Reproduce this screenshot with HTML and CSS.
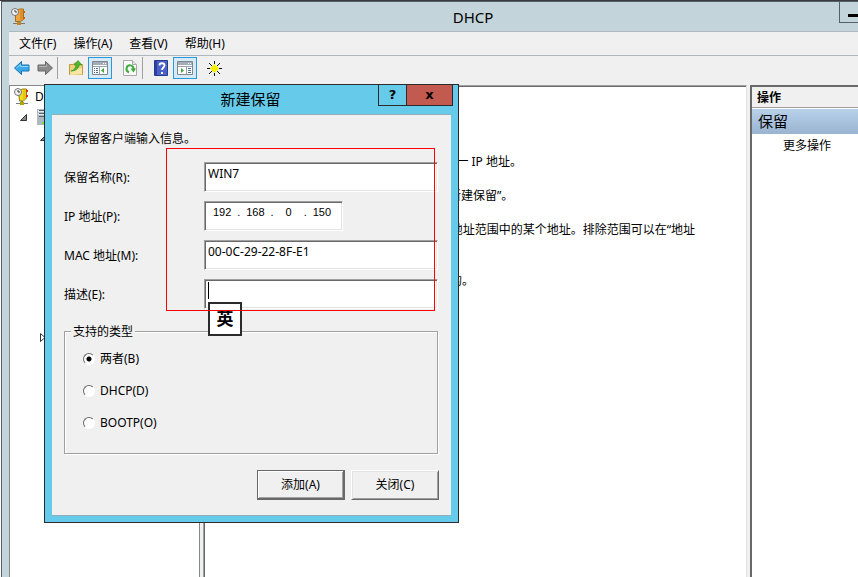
FILE: index.html
```html
<!DOCTYPE html>
<html lang="zh-CN">
<head>
  <meta charset="UTF-8">
  <meta name="viewport" content="width=device-width, initial-scale=1.0">
  <title>DHCP</title>
  <link rel="stylesheet" href="styles.css">
</head>
<body>
  <div class="desktop">
    <div class="strip"></div>
    <div class="window">
      <header class="titlebar">
        <svg class="app-icon" width="16" height="18" viewBox="0 0 16 18">
          <path d="M4.500 3.500l4-2.500h4v10.500l-3 2h-5z" fill="#efa53c" stroke="#a86c1a"/>
          <path d="M9 3l3-2v10l-3 2z" fill="#d9912f"/>
          <path d="M12 3h2v2h-2zM12 9h2v2h-2z" fill="#c8601e"/>
          <circle cx="4" cy="4" r="3.500" fill="#f2f2f2" stroke="#777"/>
          <path d="M4 2v2h2" fill="none" stroke="#444"/>
          <path d="M7 13h2v2H7zM2 15h12v1H2z" fill="#777"/>
          <path d="M6 14h4v3H6z" fill="#c8871e"/>
        </svg>
        <h1>DHCP</h1>
        <button class="minimize" aria-label="最小化"><span></span></button>
      </header>

      <nav class="menubar">
        <a href="#">文件(F)</a>
        <a href="#">操作(A)</a>
        <a href="#">查看(V)</a>
        <a href="#">帮助(H)</a>
      </nav>

      <div class="toolbar">
        <button class="tool" aria-label="后退">
          <svg width="18" height="16" viewBox="0 0 18 16"><path d="M1.500 8l7-6.500V5h7.500v6H8.500v3.500z" fill="#39a9ea" stroke="#1a6fb0"/><path d="M3.500 8l4-3.500V6.500h8" fill="none" stroke="#8fd6fb"/></svg>
        </button>
        <button class="tool" aria-label="前进">
          <svg width="18" height="16" viewBox="0 0 18 16"><path d="M16.500 8l-7-6.500V5H2v6h7.500v3.500z" fill="#8b8b8b" stroke="#666"/><path d="M3 6.500h7.500V4.500" fill="none" stroke="#b5b5b5"/></svg>
        </button>
        <span class="sep"></span>
        <button class="tool" aria-label="向上">
          <svg width="16" height="16" viewBox="0 0 16 16"><path d="M1.500 14.500v-10h4l1-1.500h3l1 1.500h4v10z" fill="#f0d27c" stroke="#c49a3c"/><path d="M2 15L14 14.500V8L4 9z" fill="#f8e6a4"/><path d="M3 11c3-1 5-3 5-6H6l4-4.500L14 5h-3c0 4-4 6-8 6z" fill="#4db82c" stroke="#2d8a17" stroke-width=".6"/></svg>
        </button>
        <button class="tool pressed" aria-label="显示控制台树">
          <svg width="16" height="14" viewBox="0 0 16 14"><path d="M.5.5h15v13H.5z" fill="#fff" stroke="#7e8894"/><path d="M1 1h14v3H1z" fill="#a3acb7"/><path d="M11 2h1v1h-1zM13 2h1v1h-1z" fill="#fff"/><path d="M1 5.500h14M7.500 6v7" stroke="#9aa3ad"/><path d="M2 7h1v1H2zM2 9h1v1H2zM2 11h1v1H2zM4 7h2v1H4zM4 9h2v1H4zM4 11h2v1H4z" fill="#4a6c92"/><path d="M12 7v5L9 9.500z" fill="#3fa535"/></svg>
        </button>
        <button class="tool" aria-label="刷新">
          <svg width="14" height="16" viewBox="0 0 14 16"><path d="M.5.5h9l4 4v11H.5z" fill="#fafafa" stroke="#a9a9a9"/><path d="M9.500.5v4h4" fill="#e2e2e2" stroke="#a9a9a9"/><path d="M6 12.200A3.500 3.500 0 1 1 10.500 9" fill="none" stroke="#3fab39" stroke-width="2"/><path d="M7.500 8.500h5.500l-2.500 4z" fill="#3fab39"/></svg>
        </button>
        <span class="sep"></span>
        <button class="tool" aria-label="帮助">
          <svg width="14" height="16" viewBox="0 0 14 16"><path d="M.5.500h13v15H.5z" fill="#4a62c8" stroke="#263a8e"/><path d="M1 1h2v14H1z" fill="#2c429c"/><path d="M5.500 5.500c0-3 5-3 5 0 0 2-2.500 2-2.500 4.500M8 12v2" fill="none" stroke="#fff" stroke-width="1.800"/></svg>
        </button>
        <button class="tool pressed" aria-label="显示操作窗格">
          <svg width="16" height="14" viewBox="0 0 16 14"><path d="M.5.5h15v13H.5z" fill="#fff" stroke="#7e8894"/><path d="M1 1h14v3H1z" fill="#a3acb7"/><path d="M11 2h1v1h-1zM13 2h1v1h-1z" fill="#fff"/><path d="M1 5.500h14M9.500 6v7" stroke="#9aa3ad"/><path d="M11 7h3v1h-3zM11 9h3v1h-3zM11 11h3v1h-3z" fill="#4a6c92"/><path d="M4 7v5l3-2.500z" fill="#3fa535"/></svg>
        </button>
        <button class="tool" aria-label="新建">
          <svg width="15" height="15" viewBox="0 0 15 15"><path d="M7.500 0v15M0 7.500h15M2 2l11 11M13 2L2 13" stroke="#111"/><path d="M7 3h1v9H7zM3 7h9v1H3zM5 5h1v1H5zM9 5h1v1H9zM5 9h1v1H5zM9 9h1v1H9zM6 4h1v2H6zM8 4h1v2H8zM6 9h1v2H6zM8 9h1v2H8zM4 6h2v1H4zM4 8h2v1H4zM9 6h2v1H9zM9 8h2v1H9zM6 6h3v3H6z" fill="#f4f000"/></svg>
        </button>
      </div>

      <main class="panes">
        <section class="tree">
          <div class="node">
            <svg width="16" height="18" viewBox="0 0 16 18">
              <path d="M4.500 3.500l4-2.500h4v9l-3 3h-4z" fill="#f0dc1c" stroke="#8f7a00"/>
              <path d="M9 3l3-2v9l-3 3z" fill="#e0c814"/>
              <path d="M12 2h2v2h-2zM12 7h2v2h-2z" fill="#e02a1e"/>
              <circle cx="4" cy="4" r="3.500" fill="#f2f2f2" stroke="#777"/>
              <path d="M4 2v2h2" fill="none" stroke="#333"/>
              <path d="M7 13h2v2H7zM2 15h12v1H2z" fill="#6f7f7f"/>
              <path d="M6 14h4v3H6z" fill="#b8a200"/>
            </svg>
            <span>DHCP</span>
          </div>
          <div class="node level1">
            <svg width="7" height="7" viewBox="0 0 7 7"><path d="M6.500.5v6h-6z" fill="#888" stroke="#333"/></svg>
            <svg width="14" height="16" viewBox="0 0 14 16"><path d="M0 0h14v16H0z" fill="#aeb8c0"/><path d="M1 1h13v2H1zM1 4h13v2H1z" fill="#e4e9ec"/><path d="M2 1.500h12M2 4.500h12M2 7.500h12" stroke="#56616b"/><path d="M5 13h2v2H5z" fill="#6ce02c"/></svg>
          </div>
          <div class="node level2">
            <svg width="7" height="7" viewBox="0 0 7 7"><path d="M6.500.5v6h-6z" fill="#888" stroke="#333"/></svg>
          </div>
          <div class="node level2 folded">
            <svg width="6" height="9" viewBox="0 0 6 9"><path d="M.5.5v8L5 4.500z" fill="#fff" stroke="#333"/></svg>
          </div>
        </section>

        <section class="details">
          <p>保留可以确保一个 DHCP 客户端永远得到同一 IP 地址。</p>
          <p>若要添加一个保留，请在“操作”菜单上，单击“新建保留”。</p>
          <p>保留的地址可以是作用域的地址范围中的某个地址。排除范围可以在“地址</p>
          <p class="last">池中的。</p>
        </section>

        <aside class="actions">
          <h2>操作</h2>
          <h3>保留</h3>
          <a href="#">更多操作</a>
        </aside>
      </main>
    </div>

    <form class="dialog" role="dialog" aria-labelledby="dialogTitle">
      <div class="dialog-title">
        <h2 id="dialogTitle">新建保留</h2>
        <button type="button" class="caption" aria-label="帮助">?</button>
        <button type="button" class="caption close" aria-label="关闭">x</button>
      </div>
      <div class="dialog-body">
        <p>为保留客户端输入信息。</p>
        <div class="fields">
          <label for="name">保留名称(R):</label>
          <input type="text" id="name" value="WIN7">
          <label for="ip1">IP 地址(P):</label>
          <div class="ip">
            <input type="text" id="ip1" value="192"><span>.</span>
            <input type="text" aria-label="第 2 段" value="168"><span>.</span>
            <input type="text" aria-label="第 3 段" value="0"><span>.</span>
            <input type="text" aria-label="第 4 段" value="150">
          </div>
          <label for="mac">MAC 地址(M):</label>
          <input type="text" id="mac" value="00-0C-29-22-8F-E1">
          <label for="desc">描述(E):</label>
          <div class="desc">
            <input type="text" id="desc">
            <span class="caret"></span>
          </div>
        </div>
        <fieldset>
          <legend>支持的类型</legend>
          <label><input type="radio" name="type" checked>两者(B)</label>
          <label><input type="radio" name="type">DHCP(D)</label>
          <label><input type="radio" name="type">BOOTP(O)</label>
        </fieldset>
        <div class="buttons">
          <button type="button" class="btn default">添加(A)</button>
          <button type="button" class="btn">关闭(C)</button>
        </div>
      </div>
      <div class="ime">英</div>
      <div class="marker"></div>
    </form>
  </div>
</body>
</html>
```
FILE: styles.css
```css
* { box-sizing: border-box; }
body { margin: 0; font-family: "Noto Sans", "Noto Sans CJK SC", sans-serif; font-size: 12px; line-height: 16px; color: #000; background: #fff; overflow: hidden; }
h1, h2, h3, p { margin: 0; font-weight: normal; }
a { color: #000; text-decoration: none; }
button { font: inherit; color: #000; padding: 0; }
input { font: inherit; color: #000; }
svg { display: block; }

.desktop { position: relative; display: flex; flex-direction: column; height: 100vh; padding-left: 1px; background: #fff; }
.strip { height: 1px; margin-left: -1px; background: #3d3a3e; }

/* main window */
.window { flex: 1; display: flex; flex-direction: column; min-height: 0; padding-left: 7px; background: #c3d5db; border: solid #55606a; border-width: 1px 0 0 1px; }
.titlebar { display: flex; align-items: center; height: 29px; padding-left: 2px; }
.titlebar h1 { flex: 1; padding-left: 80px; text-align: center; font-size: 15px; line-height: 28px; }
.minimize { align-self: flex-start; display: flex; align-items: center; width: 19px; height: 21px; padding-left: 8px; background: none; border: solid #55606a; border-width: 0 0 1px 1px; }
.minimize span { width: 11px; height: 3px; margin-top: 6px; background: #000; }

.menubar { display: flex; gap: 17px; height: 25px; padding: 4px 10px; background: #f0f0f0; border: solid #b0b6bd; border-width: 1px 0; }
.toolbar { display: flex; align-items: center; height: 29px; padding: 0 1px 5px; background: #f0f0f0; }
.tool { display: flex; align-items: center; justify-content: center; width: 23px; height: 22px; background: none; border: 0; }
.tool.pressed { width: 24px; margin: 0 6px 0 1px; background: #d6e9f6; border: 1px solid #2a98dc; }
.sep { width: 1px; height: 22px; margin: 0 6px 0 1px; background: #a0a0a0; }

.panes { flex: 1; display: grid; grid-template-columns: 191px 1fr 108px; gap: 3px; min-height: 0; background: #f0f0f0; }
.tree { padding-top: 1px; background: #fff; border: 1px solid #828790; border-bottom: 0; }
.node { display: flex; align-items: center; gap: 5px; height: 20px; padding-left: 4px; }
.level1 { padding-left: 10px; gap: 10px; }
.level2 { padding-left: 30px; }
.folded { margin-top: 180px; }
.details { padding: 68px 10px 0 4px; background: #fff; border: solid #a0a0a0; border-width: 1px 1px 0 1px; border-right-color: #e3e3e3; box-shadow: inset 1px 1px #696969; }
.details p { width: 487px; height: 34px; text-align: right; white-space: nowrap; }
.details p:nth-child(1) { width: 314px; }
.details p:nth-child(2) { width: 291px; }
.details .last { width: 266px; margin-top: 17px; }
.actions { background: #fff; border: solid #696969; border-width: 2px 0 0 2px; }
.actions h2 { height: 21px; padding-left: 5px; font-size: 12px; font-weight: bold; line-height: 21px; background: #f0f0f0; border-bottom: 1px solid #a0a0a0; }
.actions h3 { height: 25px; margin-top: 1px; padding-left: 6px; font-size: 15px; line-height: 25px; background: linear-gradient(#b9d1ea, #99b4d1); }
.actions a { display: block; padding: 4px 0 0 31px; }

/* dialog */
.dialog { position: absolute; left: 44px; top: 84px; width: 415px; padding: 0 7px 6px; background: #66caea; border: 1px solid #2b2b2b; }
.dialog-title { display: flex; height: 29px; margin-right: -2px; }
.dialog-title h2 { flex: 1; padding-left: 71px; text-align: center; font-size: 15px; line-height: 28px; }
.caption { width: 28px; height: 21px; font-family: "DejaVu Sans", sans-serif; font-weight: bold; font-size: 13px; line-height: 18px; background: none; border: solid #2b2b2b; border-width: 0 0 1px 1px; }
.caption.close { width: 47px; padding-bottom: 1px; background: #c35a50; border-right-width: 1px; }
.dialog-body { padding: 16px 13px 15px 12px; background: #f0f0f0; border: solid #93aeb8; border-width: 1px 0; }
.fields { display: grid; grid-template-columns: 140px 234px; row-gap: 9px; align-items: center; margin-top: 15px; }
.fields > label { padding-top: 2px; }
.fields input[type=text], .ip { width: 100%; height: 30px; padding: 0 3px 7px; background: #fff; border: 1px solid #a0a0a0; border-right-color: #fff; border-bottom-color: #fff; box-shadow: inset 1px 1px #696969, inset -1px -1px #e3e3e3; outline: 0; }
.ip { display: flex; width: 139px; padding: 2px 5px 0 2px; font-family: "Liberation Sans", sans-serif; font-size: 11px; }
.fields .ip input { flex: 1; min-width: 0; height: 16px; padding: 0; text-align: center; border: 0; box-shadow: none; }
.desc { position: relative; height: 30px; }
.caret { position: absolute; left: 4px; top: 3px; width: 1px; height: 17px; background: #000; }

fieldset { height: 131px; margin: 14px 0 0; padding: 3px 18px 0; border: 1px solid #a0a0a0; box-shadow: 1px 1px #fff, inset 1px 1px #fff; }
legend { margin-left: -12px; padding: 0 2px; line-height: 17px; background: #f0f0f0; }
fieldset label { display: flex; align-items: center; gap: 5px; height: 32px; }
input[type=radio] { appearance: none; width: 12px; height: 12px; margin: 0; background: #fff; border: 1px solid #fff; border-top-color: #696969; border-left-color: #696969; border-radius: 50%; }
input[type=radio]:checked { background: radial-gradient(circle, #000 2px, #fff 3px); }

.buttons { display: flex; justify-content: flex-end; gap: 6px; margin: 16px -1px 0 0; }
.btn { width: 88px; height: 30px; background: #f0f0f0; border: 1px solid #fff; border-right-color: #696969; border-bottom-color: #696969; box-shadow: inset 1px 1px #e3e3e3, inset -1px -1px #a0a0a0; }
.btn.default { border: solid #696969; border-width: 1px 2px 2px 1px; box-shadow: inset 1px 1px #fff, inset -1px -1px #a0a0a0; }

.ime { position: absolute; left: 163px; top: 217px; width: 34px; height: 34px; text-align: center; font-weight: bold; font-size: 17px; line-height: 30px; background: #fff; border: 2px solid #2b2b2b; }
.marker { position: absolute; left: 121px; top: 63px; width: 269px; height: 163px; border: 1px solid #f00; pointer-events: none; }
```
